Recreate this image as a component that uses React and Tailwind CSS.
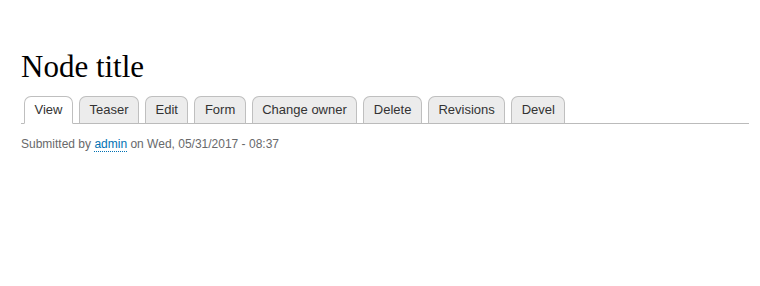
import React from 'react'

const TABS = ['View', 'Teaser', 'Edit', 'Form', 'Change owner', 'Delete', 'Revisions', 'Devel']

export default function App() {
  return (
    <div className="min-h-[286px] bg-white pt-[48px] pl-[21px] pr-[11px]" style={{ fontFamily: '"Liberation Sans", Arial, sans-serif' }}>
      <h1 className="text-[31px] leading-[37px] text-black font-normal" style={{ fontFamily: '"Liberation Serif", Georgia, serif' }}>
        Node title
      </h1>

      <ul className="mt-[11px] flex gap-[6px] pl-[3px] border-b border-[#bbbbbb] list-none">
        {TABS.map((t, i) => (
          <li key={t} className="-mb-px">
            <a
              href="#"
              className={`block h-[28px] px-[9.5px] pt-[5px] text-[13px] leading-[16px] text-[#333] rounded-t-[7px] border border-[#bfbfbf]
              ${i === 0 ? 'bg-white border-b-white' : 'bg-[#ececec] border-b-[#bbbbbb]'}`}
            >
              {t}
            </a>
          </li>
        ))}
      </ul>

      <div className="mt-[13px] text-[12px] leading-[15px] text-[#68696b]">
        Submitted by{' '}
        <a href="#" className="text-[#0071b3] border-b border-dotted border-[#0071b3]">admin</a>
        {' '}on Wed, 05/31/2017 - 08:37
      </div>
    </div>
  )
}
